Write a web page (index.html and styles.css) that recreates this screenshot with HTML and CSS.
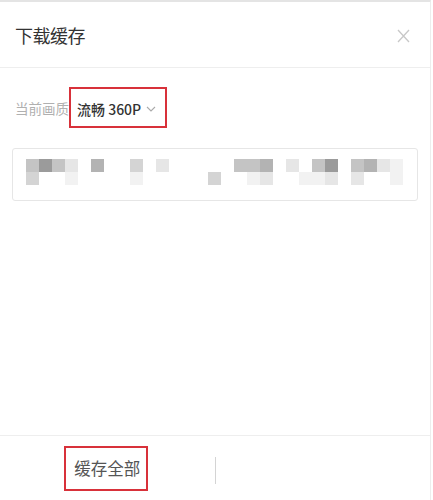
FILE: index.html
```html
<!DOCTYPE html>
<html lang="zh-CN">
<head>
    <meta charset="UTF-8">
    <meta name="viewport" content="width=device-width, initial-scale=1.0">
    <title>下载缓存</title>
    <link rel="stylesheet" href="styles.css">
</head>
<body>

<div class="sheet">

    <header class="sheet-header">
        <h2>下载缓存</h2>
        <button class="close-btn" aria-label="关闭">
            <svg width="13" height="14" viewBox="0 0 13 14">
                <path d="M1 1 L12 13 M12 1 L1 13" stroke="#c8c8c8" stroke-width="1.3" fill="none"/>
            </svg>
        </button>
    </header>

    <main class="sheet-body">
        <div class="quality-row">
            <span class="quality-label">当前画质</span>
            <span class="quality-pick">
                流畅 360P
                <svg width="10" height="6" viewBox="0 0 10 6">
                    <path d="M1 1 L5 5 L9 1" stroke="#aaa" stroke-width="1.1" fill="none"/>
                </svg>
            </span>
        </div>

        <div class="episode-box">
            <div class="mosaic">
                <span class="s3"></span><span class="s1"></span><span class="s3"></span><span class="s5"></span><span></span>
                <span class="s2"></span><span></span><span></span><span class="s4"></span><span></span>
                <span class="s5"></span><span></span><span></span><span></span><span></span>
                <span></span><span class="s3"></span><span class="s3"></span><span class="s2"></span><span></span>
                <span class="s5"></span><span></span><span class="s3"></span><span class="s1"></span><span></span>
                <span class="s3"></span><span class="s2"></span><span class="s5"></span><span class="s6"></span>

                <span class="s4"></span><span></span><span></span><span class="s6"></span><span></span>
                <span></span><span></span><span></span><span class="s6"></span><span></span>
                <span></span><span></span><span></span><span></span><span class="s4"></span>
                <span></span><span></span><span class="s6"></span><span class="s5"></span><span></span>
                <span></span><span class="s6"></span><span class="s6"></span><span class="s5"></span><span></span>
                <span class="s5"></span><span></span><span></span><span class="s6"></span>
            </div>
        </div>
    </main>

    <footer class="sheet-footer">
        <div class="footer-btn">
            <span class="cache-all">缓存全部</span>
        </div>
        <div class="footer-divider"></div>
        <div class="footer-btn"></div>
    </footer>

</div>

</body>
</html>
```

FILE: styles.css
```css
* {
    margin: 0;
    padding: 0;
    box-sizing: border-box;
    font-family: "Noto Sans CJK SC", "Noto Sans", sans-serif;
}

body {
    background-color: white;
}

.sheet {
    width: 431px;
    height: 500px;
    display: flex;
    flex-direction: column;
    border-top: 2px solid #e4e4e4;
    border-right: 1px solid #ededed;
}

.sheet-header {
    height: 66px;
    display: flex;
    align-items: center;
    justify-content: space-between;
    padding: 0 20px 0 15px;
    border-bottom: 1px solid #eeeeee;
}

.sheet-header h2 {
    font-size: 18px;
    font-weight: normal;
    color: #333;
    letter-spacing: -0.5px;
}

.close-btn {
    border: none;
    background: none;
    display: flex;
    margin-top: 2px;
}

.sheet-body {
    flex: 1;
    padding: 19px 12px 0 12px;
}

.quality-row {
    display: flex;
    align-items: center;
    padding-left: 3px;
}

.quality-label {
    font-size: 13.5px;
    color: #b0b0b0;
}

.quality-pick {
    display: inline-flex;
    align-items: center;
    gap: 5px;
    height: 41px;
    padding: 2px 9px 0 6px;
    border: 2px solid #d8313a;
    font-size: 14px;
    font-weight: 500;
    color: #333;
}

.episode-box {
    margin-top: 20px;
    height: 53px;
    border: 1px solid #e6e6e6;
    border-radius: 3px;
    padding: 10px 0 0 13px;
}

.mosaic {
    display: grid;
    grid-template-columns: repeat(29, 13px);
    grid-auto-rows: 13px;
    filter: blur(0.6px);
}

.mosaic span.s1 { background: #9b9b9b; }
.mosaic span.s2 { background: #b3b3b3; }
.mosaic span.s3 { background: #c4c4c4; }
.mosaic span.s4 { background: #d4d4d4; }
.mosaic span.s5 { background: #e6e6e6; }
.mosaic span.s6 { background: #f2f2f2; }

.sheet-footer {
    height: 65px;
    display: flex;
    align-items: center;
    border-top: 1px solid #eeeeee;
}

.footer-btn {
    flex: 1;
    display: flex;
    justify-content: center;
}

.cache-all {
    display: inline-block;
    margin-left: -2px;
    margin-top: 1px;
    padding: 8px 6px 9px 8px;
    border: 2.5px solid #d8313a;
    font-size: 16.5px;
    color: #555;
    line-height: 24px;
}

.footer-divider {
    width: 1px;
    height: 27px;
    margin-top: 4px;
    background: #d4d4d4;
}
```
